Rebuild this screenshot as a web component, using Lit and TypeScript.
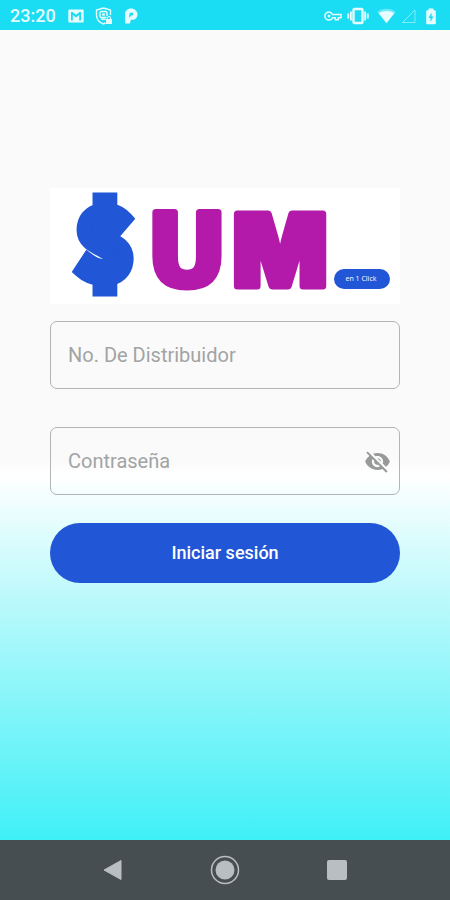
import { LitElement, html, css } from "lit";
import { customElement, state } from "lit/decorators.js";

@customElement("status-bar")
class StatusBar extends LitElement {
  static styles = css`
    :host {
      display: flex;
      align-items: center;
      justify-content: space-between;
      box-sizing: border-box;
      height: 30px;
      padding: 2px 14px 0 10px;
      background: #1adcf2;
      color: #e6fdff;
      font: 500 18px/28px Roboto, sans-serif;
    }
    .group {
      display: flex;
      align-items: center;
    }
    .left {
      gap: 10px;
    }
    .right {
      gap: 5px;
    }
    svg {
      display: block;
      fill: currentColor;
    }
    .time {
      margin-right: 2px;
    }
    .wifi {
      margin-left: 3px;
    }
  `;

  render() {
    return html`
      <div class="group left">
        <span class="time">23:20</span>
        <svg width="16" height="14" viewBox="0 0 16 14" aria-hidden="true">
          <path fill-rule="evenodd" d="M1.500 0.500h13a1.200 1.200 0 0 1 1.200 1.200v10.600a1.200 1.200 0 0 1-1.200 1.200h-13a1.200 1.200 0 0 1-1.200-1.200V1.700A1.200 1.200 0 0 1 1.500 0.500zM3 3v8.500h1.800V6L8 8.500 11.200 6v5.500H13V3h-1.500L8 5.700 4.500 3z" />
        </svg>
        <svg width="20" height="18" viewBox="0 0 19 18" aria-hidden="true">
          <path d="M9 1L16 3v5M9 1L2 3v5c0 4.500 3 7.500 7 9l2-1" fill="none" stroke="currentColor" stroke-width="1.400" />
          <path d="M12 10.500H7A1.500 1.500 0 0 1 5.500 9V6A1.500 1.500 0 0 1 7 4.500h4A1.500 1.500 0 0 1 12.500 6v3" fill="none" stroke="currentColor" stroke-width="1.400" />
          <path d="M7.500 6.500h3v2h-3zM6 11.500h5v1.500H7zM11.500 12h1v-1a2 2 0 0 1 4 0v1h1v5h-6zM13.500 12h2v-1a1 1 0 0 0-2 0z" />
        </svg>
        <svg width="14" height="16" viewBox="0 0 14 16" aria-hidden="true">
          <path fill-rule="evenodd" d="M1 6.500C1 3 3.500 0.500 7 0.500S13.500 3 13.500 6.200s-2.200 5.600-5.200 5.600H6.800L6 15.500H1.200zM5.700 5L5 9.200h1.200l.3-1.500h.7c1.300 0 2.100-.6 2.100-1.600S8.600 4.600 7.700 4.600z" />
        </svg>
      </div>
      <div class="group right">
        <svg width="18" height="12" viewBox="0 0 18 12" aria-hidden="true">
          <path fill="none" stroke="currentColor" stroke-width="1.500" d="M8.500 4.500A4 4 0 1 0 8.500 7.700h2.800v2h3V7.700H17V4.500z" />
          <circle cx="5" cy="6.100" r="1.400" />
        </svg>
        <svg width="22" height="18" viewBox="0 0 22 18" aria-hidden="true">
          <rect x="6.500" y="2" width="9" height="14" rx="1" fill="none" stroke="currentColor" stroke-width="2.400" />
          <path d="M3 4.500h1.800v9H3zM.3 6.500h1.900v5H.3zM17.200 4.500H19v9h-1.800zM19.800 6.500h1.900v5h-1.900z" />
        </svg>
        <svg class="wifi" width="19" height="16" viewBox="0 0 19 16" aria-hidden="true">
          <path opacity=".4" d="M.3 4C5.500-.3 13.500-.3 18.700 4L9.500 15.500z" />
          <path d="M1.800 5.200C6 2.400 13 2.400 17.200 5.200L9.500 15z" />
        </svg>
        <svg width="16" height="16" viewBox="0 0 16 16" aria-hidden="true">
          <path d="M1.500 14.500L14 2v12.500z" fill="none" stroke="currentColor" opacity=".5" />
        </svg>
        <svg width="14" height="17" viewBox="3 0 14 17" aria-hidden="true">
          <path fill-rule="evenodd" d="M9.500.5h5v1.700h1.300a1 1 0 0 1 1 1v12a1 1 0 0 1-1 1H8.200a1 1 0 0 1-1-1v-12a1 1 0 0 1 1-1h1.300zM12.600 4.500L9.500 10h2v4l3-5.500h-1.900z" />
        </svg>
      </div>
    `;
  }
}

@customElement("brand-logo")
class BrandLogo extends LitElement {
  static styles = css`
    :host {
      display: block;
      background: #fff;
    }
    svg {
      display: block;
      width: 100%;
      overflow: visible;
    }
    text {
      font-weight: 900;
      stroke-linejoin: round;
      stroke-width: 7px;
    }
    .sign {
      font-family: "Noto Sans CJK JP", sans-serif;
      font-size: 92px;
      fill: #2156d6;
      stroke: #2156d6;
      stroke-width: 14px;
      stroke-linejoin: miter;
    }
    .letters {
      font-family: Inter, sans-serif;
      font-size: 99px;
      fill: #b41aaa;
      stroke: #b41aaa;
    }
    .wide {
      font-family: "DejaVu Sans", sans-serif;
    }
    .pill {
      fill: #2156d6;
    }
    .tag {
      font: 400 7px "Open Sans", sans-serif;
      fill: #fff;
      stroke: none;
    }
  `;

  render() {
    return html`
      <svg viewBox="0 0 350 116" role="img" aria-label="$UM en 1 Click">
        <text class="sign" x="55" y="90" text-anchor="middle">$</text>
        <text class="letters wide" x="137" y="98" text-anchor="middle">U</text>
        <text class="letters" x="230" y="98" text-anchor="middle">M</text>
        <rect class="pill" x="284" y="81" width="56" height="20" rx="10" />
        <text class="tag" x="311" y="93" text-anchor="middle">en 1 Click</text>
      </svg>
    `;
  }
}

@customElement("navigation-bar")
class NavigationBar extends LitElement {
  static styles = css`
    :host {
      display: grid;
      grid-template-columns: repeat(3, 112px);
      justify-content: center;
      height: 60px;
      background: #464e52;
    }
    button {
      display: grid;
      place-items: center;
      padding: 0;
      border: 0;
      background: none;
      color: #b9bec0;
    }
    svg {
      fill: currentColor;
    }
  `;

  render() {
    return html`
      <button aria-label="Atrás">
        <svg width="20" height="22" viewBox="0 0 20 22"><path d="M1 11L18 1.500v19z" stroke="currentColor" stroke-linejoin="round" /></svg>
      </button>
      <button aria-label="Inicio">
        <svg width="30" height="30" viewBox="0 0 30 30">
          <circle cx="15" cy="15" r="13.500" fill="none" stroke="currentColor" stroke-width="1.500" />
          <circle cx="15" cy="15" r="9.500" />
        </svg>
      </button>
      <button aria-label="Recientes">
        <svg width="20" height="20" viewBox="0 0 20 20"><rect width="20" height="20" rx="2" /></svg>
      </button>
    `;
  }
}

@customElement("app-root")
class AppRoot extends LitElement {
  static styles = css`
    :host {
      display: flex;
      flex-direction: column;
      min-height: 100vh;
      font-family: Roboto, sans-serif;
    }
    main {
      flex: 1;
      padding: 158px 50px 48px;
      background: linear-gradient(#fafafa 0%, #fafafa 53%, #fff 55%, #b8f9fb 71%, #3ff0f7 100%);
    }
    form {
      display: flex;
      flex-direction: column;
      margin-top: 17px;
    }
    .field {
      display: flex;
      align-items: center;
      box-sizing: border-box;
      height: 68px;
      margin-bottom: 38px;
      padding: 0 8px 0 17px;
      border: 1px solid #b2b5b5;
      border-radius: 7px;
    }
    .field.last {
      margin-bottom: 28px;
    }
    input {
      flex: 1;
      min-width: 0;
      padding: 0;
      border: 0;
      outline: 0;
      background: none;
      color: #333;
      font: 400 20px/28px Roboto, sans-serif;
    }
    input::placeholder {
      color: #a2a4a4;
      opacity: 1;
    }
    .toggle {
      padding: 0;
      border: 0;
      background: none;
      color: #989a9a;
    }
    .toggle svg {
      display: block;
      fill: currentColor;
    }
    .submit {
      height: 60px;
      border: 0;
      border-radius: 30px;
      background: #2156d6;
      color: #fff;
      font: 500 18px/24px Roboto, sans-serif;
    }
  `;

  @state() private visible = false;

  render() {
    return html`
      <status-bar></status-bar>
      <main>
        <brand-logo></brand-logo>
        <form @submit=${(e: Event) => e.preventDefault()}>
          <div class="field">
            <input type="text" aria-label="No. De Distribuidor" placeholder="No. De Distribuidor" />
          </div>
          <div class="field last">
            <input type=${this.visible ? "text" : "password"} aria-label="Contraseña" placeholder="Contraseña" />
            <button
              class="toggle"
              type="button"
              aria-label="Mostrar contraseña"
              aria-pressed=${this.visible}
              @click=${() => (this.visible = !this.visible)}
            >
              <svg width="27" height="27" viewBox="0 0 24 24" aria-hidden="true">
                <path d="M12 7c2.760 0 5 2.240 5 5 0 .65-.13 1.260-.36 1.830l2.920 2.920c1.510-1.260 2.700-2.890 3.430-4.750-1.730-4.390-6-7.500-11-7.500-1.400 0-2.740.25-3.980.7l2.160 2.160C10.740 7.130 11.350 7 12 7zM2 4.270l2.280 2.280.46.46C3.080 8.300 1.780 10.020 1 12c1.730 4.390 6 7.500 11 7.500 1.550 0 3.030-.3 4.380-.84l.42.42L19.730 22 21 20.730 3.270 3 2 4.270zM7.530 9.800l1.550 1.550c-.05.21-.08.43-.08.65 0 1.660 1.340 3 3 3 .22 0 .44-.03.65-.08l1.550 1.550c-.67.33-1.410.53-2.200.53-2.760 0-5-2.240-5-5 0-.79.2-1.530.53-2.200zm4.310-.78l3.150 3.150.02-.16c0-1.660-1.340-3-3-3l-.17.01z" />
              </svg>
            </button>
          </div>
          <button class="submit" type="submit">Iniciar sesión</button>
        </form>
      </main>
      <navigation-bar></navigation-bar>
    `;
  }
}
